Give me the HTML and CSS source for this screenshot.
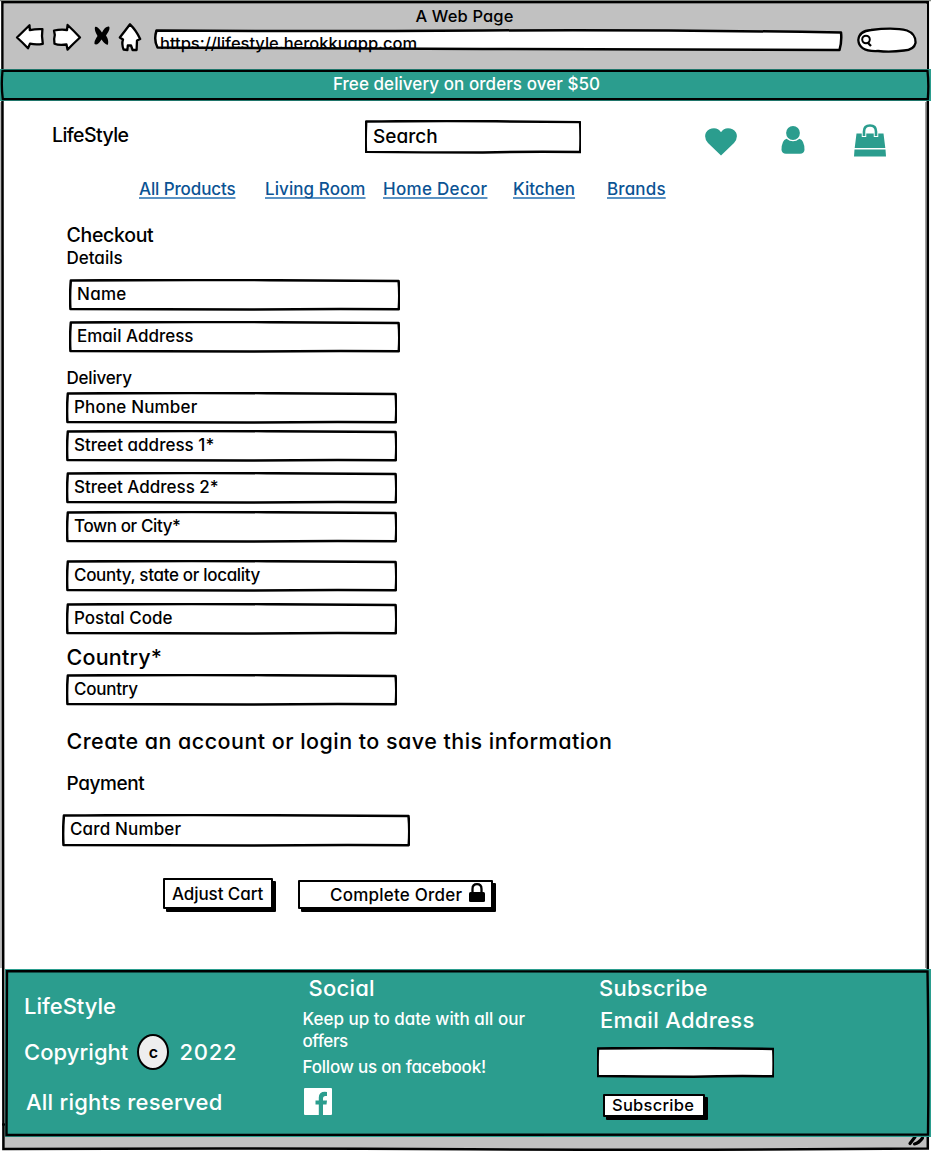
FILE: index.html
```html
<!DOCTYPE html>
<html lang="en">
<head>
<meta charset="utf-8">
<title>A Web Page</title>
<link rel="stylesheet" href="styles.css">
</head>
<body>
<svg class="defs" aria-hidden="true">
  <symbol id="box" viewBox="0 0 330 32" preserveAspectRatio="none">
    <path class="ink" vector-effect="non-scaling-stroke" d="M1.800 1.500Q110 .6 200 1.200T328.600 2Q329.800 15 328.800 30.200Q250 29.600 180 30.600Q90 30.600 1.400 30Q.6 17 1.800 1.500Z"/>
  </symbol>
</svg>
<div class="window">
  <svg class="window-frame" viewBox="0 0 931 1152" aria-hidden="true">
    <path d="M0 .5H931" stroke="#808580" stroke-width="1.5"/>
    <path d="M1 102V968M925.800 102V968" stroke="#777" stroke-width="1"/>
    <path d="M2.400 2.200H927.800V1148.600Q700 1150.600 470 1149.200T3.400 1149V1124L2.800 600Z" fill="none" stroke="#000" stroke-width="2.500"/>
    <path d="M2 1124.500H8" stroke="#000" stroke-width="2.200"/>
    <path d="M910 1143.500L915 1137M914.500 1144Q919 1143 922.500 1138" stroke="#000" stroke-width="3.200" stroke-linecap="round" fill="none"/>
  </svg>
  <header class="chrome">
    <div class="page-title">A Web Page</div>
    <div class="toolbar">
      <svg class="controls" viewBox="0 0 130 32" aria-hidden="true">
        <g fill="#fff" stroke="#000" stroke-width="2.3" stroke-linejoin="round">
          <path d="M2 15.500L14.500 3.200L14.800 8.200Q21 6.800 27.400 7.200Q26.400 14 27.800 21.800Q21 23 15 21.600L13 26.200Q7 20 2 15.500Z"/>
          <path d="M39 8.500Q46 7 52 8L52.600 3Q59 9 65 15.500Q59 21 52.500 27.600L51.500 22.500Q44 23.600 39.500 21.800Q38.600 17 39.800 13Z"/>
          <path d="M115 2.300Q110 9 104.800 15.500L108 17.500Q106.400 22 108.600 27.500L112.400 28L112.800 23.500H116L117.600 28H121.600L122 18.500L125.200 17Q121 8 115 2.300Z"/>
        </g>
        <path d="M80 5Q82.500 4 87 10.500Q90 4 94 4.500Q96 6.500 91 13.500Q94 18 93 22.500Q90.500 23.500 86.500 17.500Q82.500 24 79.500 22Q79 19 82.500 14Q79 8 80 5Z" fill="#000"/>
      </svg>
      <div class="address">
        <svg class="frame" viewBox="0 0 690 24" preserveAspectRatio="none" aria-hidden="true"><path class="ink" d="M3.500 1.500Q150 2.500 330 1.500T688 3.500Q689 12 686.500 21Q500 20.800 330 20T4.500 18.500Q.5 11 3.500 1.500Z"/></svg>
        https://lifestyle.herokkuapp.com
      </div>
      <svg class="finder" viewBox="0 0 62 28" aria-hidden="true">
        <path d="M2.300 14Q3 5 15 4Q38 1 51 4.500Q60 8 59.500 17Q58 24 48 24.500Q34 26.500 22 25Q3 26 2.300 14Z" fill="#fff" stroke="#000" stroke-width="2.300"/>
        <circle cx="10" cy="13.500" r="3.800" fill="none" stroke="#000" stroke-width="2"/>
        <path d="M11.500 16.500L15 20" stroke="#000" stroke-width="2.300"/>
      </svg>
    </div>
  </header>
  <div class="banner">
    <svg class="frame" viewBox="0 0 931 32" aria-hidden="true"><path d="M2.500 1.800Q400 2.600 927.500 1.800Q929 15 927.800 30.200H2.800Q1 16 2.500 1.800Z" fill="#2b9d8e" stroke="#000" stroke-width="2.300"/></svg>
    Free delivery on orders over $50
  </div>
  <main>
    <div class="top">
      <div class="logo">LifeStyle</div>
      <div class="field search"><svg class="frame"><use href="#box"/></svg>Search</div>
      <svg class="icon heart" viewBox="0 0 32 28"><path d="M16 27.500L3 15Q-1.500 9.500 1 4.500Q4 .3 9 .3Q13.500.5 16 4.200Q18.500.5 23 .3Q28 .3 31 4.500Q33.500 9.500 29 15Z"/></svg>
      <svg class="icon user" viewBox="0 0 24 28"><circle cx="12" cy="7" r="6.900"/><path d="M5.500 12.800Q12 17.800 18.500 12.800Q23.500 14.500 23.500 24Q23 27.600 19 27.700H5Q1 27.600.5 24Q.5 14.500 5.500 12.800Z"/></svg>
      <svg class="icon bag" viewBox="0 0 32 33"><path d="M2.500 9.500H29.500L31.300 24H.7ZM.5 25.500H31.500L32 32.500H0Z"/><path class="gap" d="M10 13V7.500Q10 1.500 16 1.500T22 7.500V13"/><path class="handle" d="M10 12V7.500Q10 1.500 16 1.500T22 7.500V12"/></svg>
    </div>
    <nav>
      <a class="products">All Products</a>
      <a class="living">Living Room</a>
      <a class="decor">Home Decor</a>
      <a class="kitchen">Kitchen</a>
      <a class="brands">Brands</a>
    </nav>
    <div class="checkout">
      <h1>Checkout</h1>
      <h2>Details</h2>
      <div class="field name"><svg class="frame"><use href="#box"/></svg>Name</div>
      <div class="field email"><svg class="frame"><use href="#box"/></svg>Email Address</div>
      <h2 class="delivery">Delivery</h2>
      <div class="field phone"><svg class="frame"><use href="#box"/></svg>Phone Number</div>
      <div class="field street1"><svg class="frame"><use href="#box"/></svg>Street address 1*</div>
      <div class="field street2"><svg class="frame"><use href="#box"/></svg>Street Address 2*</div>
      <div class="field town"><svg class="frame"><use href="#box"/></svg>Town or City*</div>
      <div class="field county"><svg class="frame"><use href="#box"/></svg>County, state or locality</div>
      <div class="field postal"><svg class="frame"><use href="#box"/></svg>Postal Code</div>
      <h3>Country*</h3>
      <div class="field country"><svg class="frame"><use href="#box"/></svg>Country</div>
      <h3 class="create">Create an account or login to save this information</h3>
      <h4>Payment</h4>
      <div class="field card"><svg class="frame"><use href="#box"/></svg>Card Number</div>
      <div class="actions">
        <div class="button adjust">Adjust Cart</div>
        <div class="button complete">Complete Order
          <svg class="lock" viewBox="0 0 16 20"><path d="M1.500 9H14.500Q16 9 16 10.500V18Q16 19 14.500 19H1.500Q0 19 0 18V10.500Q0 9 1.500 9Z"/><path d="M3.500 10V6Q3.500 1.200 8 1.200T12.500 6V10" fill="none" stroke="#000" stroke-width="2.300"/></svg>
        </div>
      </div>
    </div>
  </main>
  <footer>
    <svg class="frame" viewBox="0 0 926 168" aria-hidden="true"><path d="M2 2.200Q450 1.200 922.500 2.500Q924 90 923 165.500Q500 167 1.500 166Q1.500 80 2 2.200Z" fill="#2b9d8e" stroke="#000" stroke-width="2.400"/></svg>
    <section class="about">
      <p>LifeStyle</p>
      <p class="copyright">Copyright<span class="mark">c</span><span class="year">2022</span></p>
      <p class="rights">All rights reserved</p>
    </section>
    <section class="social">
      <h3>Social</h3>
      <p>Keep up to date with all our<br><span class="offers">offers</span></p>
      <p class="follow">Follow us on facebook!</p>
      <svg class="facebook" viewBox="0 0 28 27"><path fill="#fff" d="M1 0H27Q28 0 28 1V26Q28 27 27 27H19V16.500H22.500L23 12.500H19V10.500Q19 8 21.500 8H23V4Q14.800 3 14.800 9.500V12.500H11.500V16.500H14.800V27H1Q0 27 0 26V1Q0 0 1 0Z"/></svg>
    </section>
    <section class="subscribe">
      <h3>Subscribe</h3>
      <h3>Email Address</h3>
      <div class="field mail"><svg class="frame"><use href="#box"/></svg></div>
      <div class="button join">Subscribe</div>
    </section>
  </footer>
</div>
</body>
</html>
```
FILE: styles.css
```css
* { box-sizing: border-box; }
body {
  margin: 0;
  background: #fff;
  color: #000;
  font: 450 17px/20px Inter, "Liberation Sans", sans-serif;
  font-feature-settings: "cv11" 1;
  white-space: nowrap;
}
h1, h2, h3, h4, p { margin: 0; font-weight: inherit; }
.defs { position: absolute; width: 0; height: 0; }
.ink { fill: #fff; stroke: #000; stroke-width: 2.5px; stroke-linejoin: round; }
.frame { position: absolute; inset: 0; width: 100%; height: 100%; z-index: -1; overflow: visible; }

.window { position: relative; width: 931px; height: 1152px; isolation: isolate; background: linear-gradient(#c1c1c1, #c1c1c1) 3px 1124px / 925px 25px no-repeat; }
.window-frame { position: absolute; inset: 0; width: 931px; height: 1152px; z-index: -1; }

/* Browser chrome */
.chrome { height: 69px; padding-top: 6px; background: linear-gradient(#c1c1c1, #c1c1c1) 3.5px 3.5px / 923px 66px no-repeat; font-size: 16.5px; }
.page-title { padding-right: 2px; text-align: center; letter-spacing: .14px; }
.toolbar { display: flex; }
.controls { width: 130px; height: 32px; margin: -4px 0 0 15px; }
.address { position: relative; width: 690px; height: 24px; margin: 3px 0 0 8px; padding: 4px 0 0 7px; letter-spacing: -.02px; isolation: isolate; }
.finder { width: 62px; height: 28px; margin: 0 0 0 13px; }

.banner { position: relative; height: 32px; padding: 5px 0 0 2px; text-align: center; letter-spacing: .06px; color: #fff; background: #2b9d8e; isolation: isolate; }

/* Store header */
main { height: 868px; }
.top { display: flex; align-items: flex-start; height: 78px; padding-left: 52px; font-size: 19px; line-height: 24px; }
.logo { width: 313px; padding-top: 22px; font-size: 19.5px; letter-spacing: -.57px; }
.field { position: relative; height: 32px; padding: 5px 0 0 8px; isolation: isolate; }
.search { width: 216px; height: 34px; margin-top: 18.5px; }
.icon { flex: none; fill: #2b9d8e; }
.heart { width: 32px; height: 28px; margin: 26.5px 0 0 124px; }
.user { width: 24px; height: 28px; margin: 25px 0 0 44px; }
.bag { width: 32px; height: 33px; margin: 22.500px 0 0 49px; }
.gap { fill: none; stroke: #fff; stroke-width: 4.5px; }
.handle { fill: none; stroke: #2b9d8e; stroke-width: 2.6px; }

nav { display: grid; grid-template-columns: 126px 118px 130px 94px 60px; padding-left: 139px; color: #0b5394; }
nav a { justify-self: start; text-decoration: underline 1.5px #5b93c4; text-underline-offset: 2px; text-decoration-skip-ink: none; }
.products { letter-spacing: -.12px; }
.living { letter-spacing: .08px; }
.decor { letter-spacing: .3px; }
.brands { letter-spacing: .15px; }

/* Checkout form */
.checkout { padding-left: 66px; }
.checkout h1, .checkout h2, .checkout h3, .checkout h4 { padding-left: .5px; }
.checkout h1 { margin-top: 24px; font-size: 19.5px; line-height: 24px; letter-spacing: -.3px; }
.checkout h2 { margin-top: 1px; font-size: 17px; }
.checkout h2.delivery { margin-top: 15px; letter-spacing: -.2px; }
.checkout h3 { margin-top: 8px; font-size: 21.5px; line-height: 28px; letter-spacing: .2px; }
.checkout h3.create { margin-top: 21px; letter-spacing: .46px; }
.checkout h4 { margin-top: 17.500px; font-size: 19px; line-height: 24px; letter-spacing: -.4px; }
.checkout .field { width: 331px; }
.checkout .name { margin: 11px 0 0 3px; letter-spacing: .3px; }
.checkout .email { margin: 10px 0 0 3px; }
.phone { margin-top: 4px; letter-spacing: .17px; }
.street1 { margin-top: 6px; letter-spacing: .03px; }
.street2 { margin-top: 10px; }
.town { margin-top: 7px; letter-spacing: -.38px; }
.county { margin-top: 17px; letter-spacing: -.32px; }
.postal { margin-top: 10.5px; }
.country { margin-top: 3px; letter-spacing: -.25px; }
.checkout .card { width: 348px; height: 33px; margin: 17.5px 0 0 -4px; letter-spacing: .15px; }
.actions { display: flex; align-items: flex-start; margin-top: 31.5px; }
.button { border: 2.5px solid #000; border-radius: 1px; background: #fff; color: #000; box-shadow: 3px 3px 0 #000; }
.adjust { width: 110px; height: 31px; margin-left: 97px; padding: 4px 0 0 7px; letter-spacing: -.08px; }
.complete { display: flex; width: 195px; height: 29px; margin: 2px 0 0 25px; padding: 3px 0 0 30px; letter-spacing: .22px; }
.lock { flex: none; width: 16px; height: 20px; margin: -2px 0 0 7px; }

/* Footer */
footer { position: relative; display: flex; width: 926px; height: 168px; margin-left: 5px; color: #fff; background: #2b9d8e; isolation: isolate; }
.about { flex: none; width: 297px; padding: 23px 0 0 19px; font-size: 22px; line-height: 28px; }
.copyright { display: flex; height: 36px; margin-top: 14px; padding-top: 4px; letter-spacing: .05px; }
.mark { width: 32px; height: 36px; margin: -4px 10px 0 9px; border: 2px solid #000; border-radius: 50%; background: #eee; font-size: 16px; font-weight: 600; line-height: 33px; text-align: center; color: #000; }
.year { letter-spacing: .8px; }
.rights { margin-top: 18px; padding-left: 2px; letter-spacing: .23px; }
.social { flex: none; width: 291px; padding-top: 5px; line-height: 21.5px; }
footer h3 { font-size: 22px; line-height: 28px; letter-spacing: .25px; }
.social h3 { padding-left: 6.5px; }
.social p { margin-top: 7px; padding-left: .5px; }
.offers { letter-spacing: -.4px; }
.social .follow { margin-top: 5px; letter-spacing: -.2px; }
.facebook { display: block; width: 28px; height: 27px; margin: 9px 0 0 2px; }
.subscribe { padding: 5px 0 0 6px; }
.subscribe h3 + h3 { margin-top: 4px; padding-left: 1px; letter-spacing: .3px; }
.mail { width: 177px; height: 31px; margin: 12.5px 0 0 -2px; }
.join { width: 102px; height: 23px; margin: 16.500px 0 0 4px; padding-left: 7px; font-size: 16.5px; line-height: 19px; letter-spacing: .25px; }
```
